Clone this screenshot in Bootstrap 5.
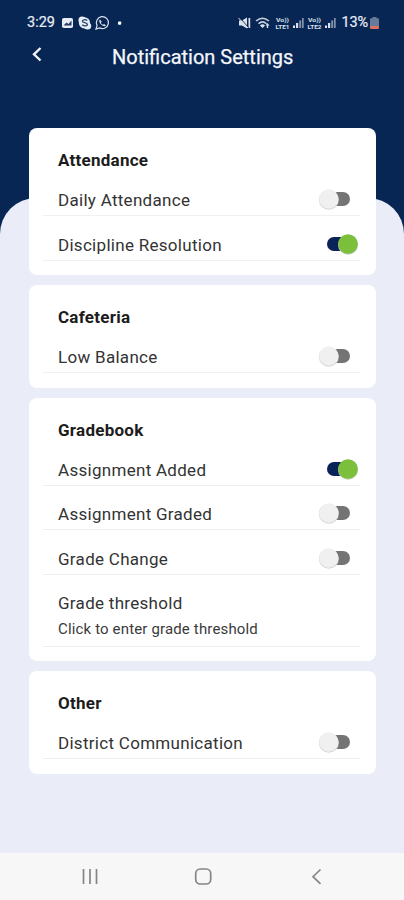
<!DOCTYPE html>
<html lang="en">
<head>
<meta charset="utf-8">
<meta name="viewport" content="width=device-width, initial-scale=1">
<title>Notification Settings</title>
<link href="https://cdn.jsdelivr.net/npm/bootstrap@5.3.0/dist/css/bootstrap.min.css" rel="stylesheet">
<style>
body{font-family:Roboto,"Liberation Sans",sans-serif;background:#082654;color:#222}
.screen{height:900px;overflow:hidden}
.status{height:36px;padding:10px 25px 0 27px;color:#e8edf5}
.status .clock{font-size:14.5px;line-height:26px;-webkit-text-stroke:.2px}
.status .battery-level{margin:0 2px;letter-spacing:-.1px}
.app-title{height:42px;color:#f4f6fa}
.app-title h1{font-size:20px;line-height:42px;font-weight:400;margin-left:69px;-webkit-text-stroke:.25px}
.back{margin-left:31px;margin-top:10px;width:12px;height:16px}
.sheet{margin-top:120px;background:#eaecf8;border-radius:36px 36px 0 0}
.cards{margin:-70px 28px 0 29px;gap:10px}
.panel{background:#fff;border-radius:8px;padding:0 16px 14.5px 14px}
.panel h2{font-size:17px;font-weight:700;line-height:20px;height:43.5px;padding:22px 0 0 15px;margin:0;letter-spacing:.25px;color:#1c1c1c}
.setting{height:44.5px;border-bottom:1px solid #f0f0f1;padding:12.5px 9px 0 15px;font-size:17px;line-height:32px;letter-spacing:.29px;color:#333}
.threshold{height:72px;line-height:26px;padding-top:15.5px}
.threshold small{font-size:15px;line-height:27px;letter-spacing:.15px;color:#3b3b3b}
.toggle{width:32px;height:22px;margin-top:4px}
.sysnav{height:47px;background:#f7f7f7}
</style>
<script src="https://cdn.jsdelivr.net/npm/bootstrap@5.3.0/dist/js/bootstrap.bundle.min.js"></script>
</head>
<body>
<svg width="0" height="0" class="position-absolute" aria-hidden="true">
<symbol id="off" viewBox="0 0 32 22" overflow="visible"><rect x="7" y="4" width="24" height="14" rx="7" fill="#747474"/><circle cx="9.8" cy="11.7" r="10" fill="#d6d6d6"/><circle cx="9.8" cy="11" r="9.7" fill="#f0f0f0"/></symbol>
<symbol id="on" viewBox="0 0 32 22" overflow="visible"><rect x="8" y="4" width="24" height="14" rx="7" fill="#092257"/><circle cx="29" cy="11.7" r="10" fill="#c7ccc3"/><circle cx="29" cy="11" r="9.8" fill="#7bbf3a"/></symbol>
</svg>
<div class="screen d-flex flex-column">
  <div class="status d-flex justify-content-between">
    <div class="d-flex">
      <span class="clock">3:29</span>
      <svg width="66" height="26" viewBox="0 0 66 26" class="ms-1">
        <rect x="3" y="8" width="11" height="10" rx="1.8" fill="#e8edf5"/><path d="M4.5 15.5l3-3 2 1.500 3-3.500v5z" fill="#26395a"/>
        <circle cx="25.4" cy="12.8" r="5.6" fill="#e8edf5"/><circle cx="23.1" cy="10.2" r="3.6" fill="#e8edf5"/><circle cx="28.6" cy="16" r="3.6" fill="#e8edf5"/>
        <path d="M28.300 10.500c-2-1.400-5-.8-4.900.8.1 1.700 5 1.200 5 3.200 0 1.800-3.400 2-5.200.3" fill="none" stroke="#28446b" stroke-width="1.300"/>
        <path d="M37 19l1.100-3.600a6 6 0 1 1 2.500 2.500z" fill="none" stroke="#dce2ec" stroke-width="1.200"/>
        <path d="M41 9.500c-1.600 1.200-.3 3.800 1.300 5.200 1.500 1.400 3.800 2.200 4.600.5l-1.900-1.200-1 .8c-1-.4-1.800-1.200-2.100-2.100l.8-1z" fill="#dce2ec"/>
        <rect x="59" y="11.500" width="3.200" height="3.200" rx=".8" fill="#fff"/>
      </svg>
    </div>
    <div class="d-flex">
      <svg width="101" height="26" viewBox="0 0 101 26" fill="#dce2ec" font-family="Roboto, sans-serif" font-weight="700">
        <path d="M1 10.500h3l5-3v11l-5-3H1zM10.500 8v10h1.700V8z"/><path d="M1.500 7.500l9 10" stroke="#082654"/><path d="M.5 8l9.500 10" stroke="#dce2ec" fill="none"/>
        <g fill="none" stroke="#c8d1de" stroke-width="1.500"><path d="M18 11q6.500-5.500 13 0M20.500 13.700q4-3.600 8 0"/></g><path d="M22 15.400q2.500-2.200 5 0L24.500 18zM29.500 13l2 2.500h-1.300V18h-1.400v-2.500h-1.300z"/>
        <text x="38" y="11.800" font-size="5.200" textLength="13" lengthAdjust="spacingAndGlyphs">Vo))</text><text x="37.500" y="18.500" font-size="5.600" textLength="14" lengthAdjust="spacingAndGlyphs">LTE1</text>
        <path d="M55 15.500h2V18h-2zM58 13h2.200v5H58z"/><path d="M61.200 10.500h2V18h-2zM64 8h1.700v10H64z" fill="#8091ab"/>
        <text x="70" y="11.800" font-size="5.200" textLength="13" lengthAdjust="spacingAndGlyphs">Vo))</text><text x="69.500" y="18.500" font-size="5.600" textLength="14" lengthAdjust="spacingAndGlyphs">LTE2</text>
        <path d="M87 15.500h2V18h-2zM90 13h2.200v5H90z"/><path d="M93.200 10.500h2V18h-2zM96 8h1.700v10H96z" fill="#8091ab"/>
      </svg>
      <span class="clock battery-level">13%</span>
      <svg width="9" height="26" viewBox="0 0 9 26"><path d="M2.500 7h4v1.200H8a1 1 0 0 1 1 1V16H0V9.200a1 1 0 0 1 1-1h1.500z" fill="#667b9b"/><path d="M0 16h9v2a1 1 0 0 1-1 1H1a1 1 0 0 1-1-1z" fill="#d9725f"/></svg>
    </div>
  </div>
  <header class="app-title d-flex">
    <svg class="back" viewBox="0 0 12 16"><path d="M9.500 2L3 8.300l6.500 6.200" fill="none" stroke="#f1f3f8" stroke-width="2.400"/></svg>
    <h1 class="mb-0">Notification Settings</h1>
  </header>
  <main class="sheet flex-grow-1">
    <div class="cards d-flex flex-column">
      <section class="panel">
        <h2>Attendance</h2>
        <div class="setting d-flex justify-content-between"><span>Daily Attendance</span><svg class="toggle overflow-visible"><use href="#off"/></svg></div>
        <div class="setting d-flex justify-content-between"><span>Discipline Resolution</span><svg class="toggle overflow-visible"><use href="#on"/></svg></div>
      </section>
      <section class="panel">
        <h2>Cafeteria</h2>
        <div class="setting d-flex justify-content-between"><span>Low Balance</span><svg class="toggle overflow-visible"><use href="#off"/></svg></div>
      </section>
      <section class="panel">
        <h2>Gradebook</h2>
        <div class="setting d-flex justify-content-between"><span>Assignment Added</span><svg class="toggle overflow-visible"><use href="#on"/></svg></div>
        <div class="setting d-flex justify-content-between"><span>Assignment Graded</span><svg class="toggle overflow-visible"><use href="#off"/></svg></div>
        <div class="setting d-flex justify-content-between"><span>Grade Change</span><svg class="toggle overflow-visible"><use href="#off"/></svg></div>
        <div class="setting threshold d-flex flex-column"><span>Grade threshold</span><small>Click to enter grade threshold</small></div>
      </section>
      <section class="panel">
        <h2>Other</h2>
        <div class="setting d-flex justify-content-between"><span>District Communication</span><svg class="toggle overflow-visible"><use href="#off"/></svg></div>
      </section>
    </div>
  </main>
  <nav class="sysnav">
    <svg width="404" height="47" viewBox="0 0 404 47" fill="none" stroke="#858585" stroke-width="1.700"><path d="M83.500 16v15M90 16v15M96.500 16v15"/><rect x="195.700" y="16" width="15" height="15" rx="4.500"/><path d="M320.500 16.500l-7.500 7.200 7.500 7.200"/></svg>
  </nav>
</div>
</body>
</html>
